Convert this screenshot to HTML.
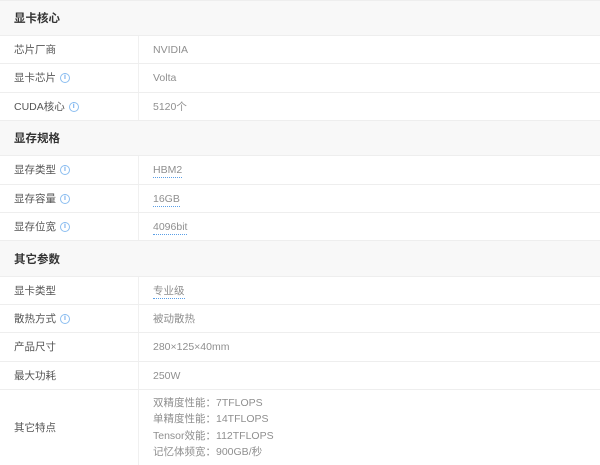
<!DOCTYPE html>
<html><head><meta charset="utf-8"><style>
*{margin:0;padding:0;box-sizing:border-box}
body{width:600px;height:465px;overflow:hidden;background:#fff;font-family:"Liberation Sans","Noto Sans CJK SC",sans-serif;}
.r{position:absolute;left:0;width:600px;border-top:1px solid #eee;}
.h{background:#f8f8f8;font-weight:bold;font-size:11.5px;color:#333;padding-left:14px;display:flex;align-items:center}
.l{position:absolute;left:14px;top:0;bottom:0;display:flex;align-items:center;font-size:10.5px;color:#555;line-height:12px}
.v{position:absolute;left:153px;top:1px;bottom:0;display:flex;flex-direction:column;justify-content:center;align-items:flex-start;font-size:10.5px;color:#8f8f8f;line-height:16.5px}
.sep{position:absolute;left:138px;top:0;bottom:0;border-left:1px solid #f0f0f0}
.i{display:inline-block;width:10px;height:10px;border:1px solid #8cbef0;border-radius:50%;color:#6aa8ee;font-size:7px;line-height:8px;text-align:center;margin-left:4px;font-weight:bold;position:relative;top:0}
.u{border-bottom:1px dotted #5a9fe6;display:inline-block;line-height:14px}
</style></head><body>
<div class="r h" style="top:0;height:35px">显卡核心</div>
<div class="r" style="top:35px;height:28px"><div class="l">芯片厂商</div><div class="sep"></div><div class="v">NVIDIA</div></div>
<div class="r" style="top:63px;height:29px"><div class="l">显卡芯片<span class="i">i</span></div><div class="sep"></div><div class="v">Volta</div></div>
<div class="r" style="top:92px;height:28px"><div class="l">CUDA核心<span class="i">i</span></div><div class="sep"></div><div class="v">5120个</div></div>
<div class="r h" style="top:120px;height:35px">显存规格</div>
<div class="r" style="top:155px;height:29px"><div class="l">显存类型<span class="i">i</span></div><div class="sep"></div><div class="v"><span class="u">HBM2</span></div></div>
<div class="r" style="top:184px;height:28px"><div class="l">显存容量<span class="i">i</span></div><div class="sep"></div><div class="v"><span class="u">16GB</span></div></div>
<div class="r" style="top:212px;height:28px"><div class="l">显存位宽<span class="i">i</span></div><div class="sep"></div><div class="v"><span class="u">4096bit</span></div></div>
<div class="r h" style="top:240px;height:36px">其它参数</div>
<div class="r" style="top:276px;height:28px"><div class="l">显卡类型</div><div class="sep"></div><div class="v"><span class="u">专业级</span></div></div>
<div class="r" style="top:304px;height:28px"><div class="l">散热方式<span class="i">i</span></div><div class="sep"></div><div class="v">被动散热</div></div>
<div class="r" style="top:332px;height:29px"><div class="l">产品尺寸</div><div class="sep"></div><div class="v">280×125×40mm</div></div>
<div class="r" style="top:361px;height:28px"><div class="l">最大功耗</div><div class="sep"></div><div class="v">250W</div></div>
<div class="r" style="top:389px;height:76px"><div class="l">其它特点</div><div class="sep"></div><div class="v" style="top:0"><div>双精度性能：7TFLOPS</div><div>单精度性能：14TFLOPS</div><div>Tensor效能：112TFLOPS</div><div>记忆体频宽：900GB/秒</div></div></div>
</body></html>
